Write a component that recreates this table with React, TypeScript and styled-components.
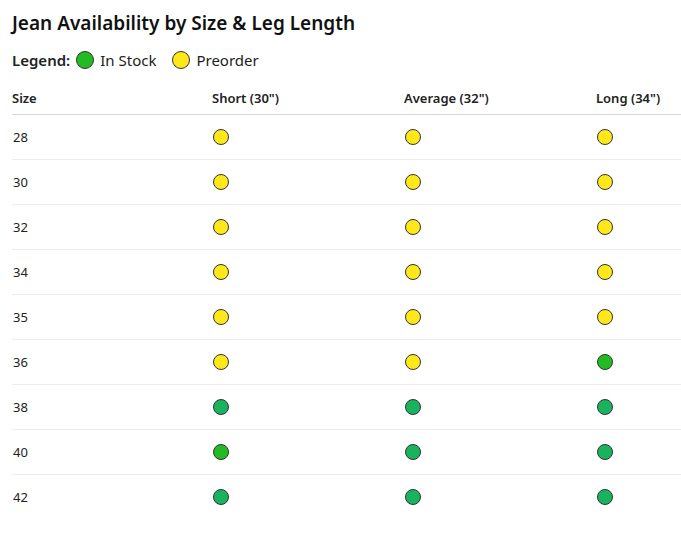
import React from "react";
import styled, { createGlobalStyle } from "styled-components";

type Status = "stock" | "stockAlt" | "pre";

const rows: { size: string; cells: Status[] }[] = [
  { size: "28", cells: ["pre", "pre", "pre"] },
  { size: "30", cells: ["pre", "pre", "pre"] },
  { size: "32", cells: ["pre", "pre", "pre"] },
  { size: "34", cells: ["pre", "pre", "pre"] },
  { size: "35", cells: ["pre", "pre", "pre"] },
  { size: "36", cells: ["pre", "pre", "stock"] },
  { size: "38", cells: ["stockAlt", "stockAlt", "stockAlt"] },
  { size: "40", cells: ["stock", "stockAlt", "stockAlt"] },
  { size: "42", cells: ["stockAlt", "stockAlt", "stockAlt"] },
];

const columns = ['Short (30")', 'Average (32")', 'Long (34")'];

const colors: Record<Status, string> = {
  stock: "#22bb22",
  stockAlt: "#18b35c",
  pre: "#ffe81a",
};

const App: React.FC = () => {
  return (
    <Page>
      <GlobalStyle />
      <Title>Jean Availability by Size &amp; Leg Length</Title>
      <Legend>
        <strong>Legend:</strong>
        <LegendItem>
          <Dot $color={colors.stock} $size={18} />
          In Stock
        </LegendItem>
        <LegendItem>
          <Dot $color={colors.pre} $size={18} />
          Preorder
        </LegendItem>
      </Legend>
      <Table>
        <HeadRow>
          <HeadCell>Size</HeadCell>
          {columns.map((c) => (
            <HeadCell key={c}>{c}</HeadCell>
          ))}
        </HeadRow>
        {rows.map((row) => (
          <Row key={row.size}>
            <Cell>{row.size}</Cell>
            {row.cells.map((s, i) => (
              <Cell key={i}>
                <Dot $color={colors[s]} $size={16} />
              </Cell>
            ))}
          </Row>
        ))}
      </Table>
    </Page>
  );
};

export default App;

const GlobalStyle = createGlobalStyle`
  html, body {
    margin: 0;
    padding: 0;
    background: #fff;
    overflow: hidden;
  }
  body {
    font-family: "Noto Sans", "Open Sans", sans-serif;
    color: #111;
  }
`;

const Page = styled.div`
  padding: 10px 0 0 12px;
`;

const Title = styled.h1`
  margin: 0;
  font-size: 19px;
  font-weight: 600;
  line-height: 26px;
  color: #111;
`;

const Legend = styled.div`
  display: flex;
  align-items: center;
  margin-top: 12px;
  font-size: 15px;
  line-height: 24px;
  color: #222;
  & strong {
    font-weight: 600;
    margin-right: 6px;
  }
`;

const LegendItem = styled.span`
  display: inline-flex;
  align-items: center;
  gap: 6px;
  margin-right: 16px;
`;

const Dot = styled.span<{ $color: string; $size: number }>`
  display: inline-block;
  width: ${(p) => p.$size}px;
  height: ${(p) => p.$size}px;
  box-sizing: border-box;
  border-radius: 50%;
  background: ${(p) => p.$color};
  border: 1px solid #333;
`;

const Table = styled.div`
  margin-top: 14px;
`;

const HeadRow = styled.div`
  display: grid;
  grid-template-columns: 200px 192px 192px 1fr;
  align-items: center;
  height: 24px;
  padding-bottom: 4px;
  border-bottom: 1px solid #d8d8d8;
`;

const HeadCell = styled.div`
  font-size: 13px;
  font-weight: 600;
  color: #222;
`;

const Row = styled.div`
  display: grid;
  grid-template-columns: 200px 192px 192px 1fr;
  align-items: center;
  height: 44px;
  border-bottom: 1px solid #ececec;
  &:last-child {
    border-bottom: none;
  }
`;

const Cell = styled.div`
  display: flex;
  align-items: center;
  padding-left: 1px;
  font-size: 13px;
  color: #222;
`;
